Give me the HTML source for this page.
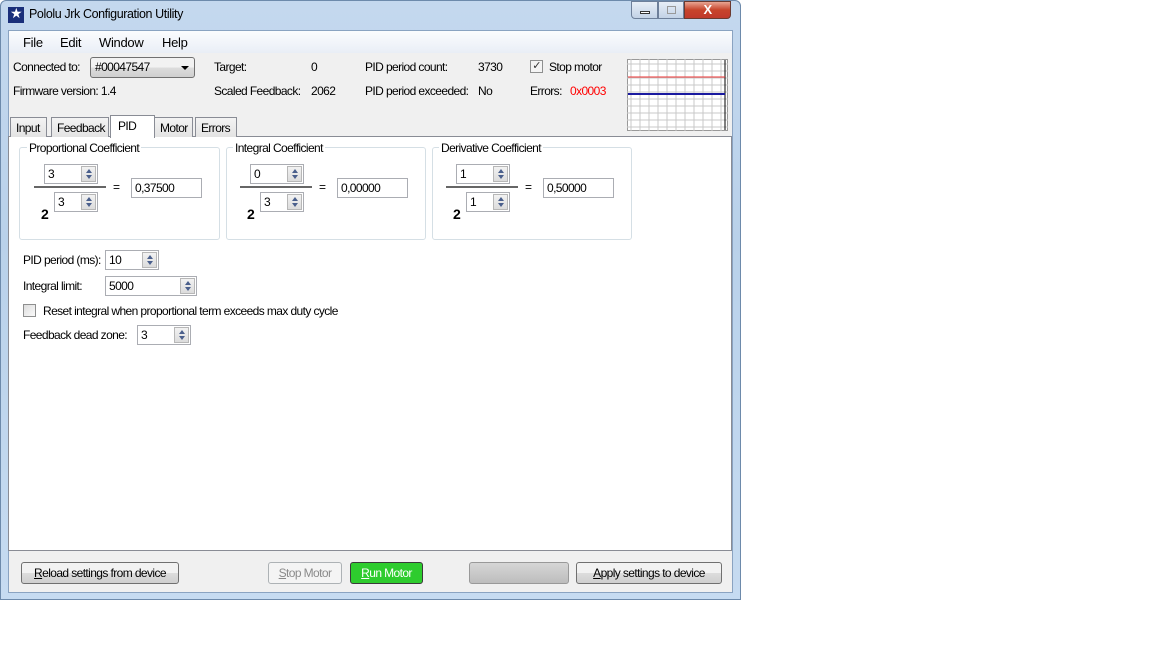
<!DOCTYPE html>
<html><head><style>
*{margin:0;padding:0;box-sizing:border-box}
body{width:1152px;height:648px;background:#fff;font-family:"Liberation Sans",sans-serif;font-size:12px;letter-spacing:-0.6px;color:#000;position:relative;overflow:hidden}
.a{position:absolute;white-space:nowrap}
.win{left:0;top:0;width:741px;height:600px;background:linear-gradient(#c4d8ee,#b9d1ea 40%,#c6dbf1);border:1px solid #6d8aab;border-radius:6px 6px 0 0}
.client{left:8px;top:30px;width:725px;height:563px;background:#f0f0f0;border:1px solid #8aa3c1}
.menu{left:9px;top:31px;width:723px;height:22px;background:linear-gradient(#fbfcfe,#e9eef6)}
.tb{background:#fff;border:1px solid #abadb3;height:20px;padding:2px 3px}
.spin{position:absolute;right:1px;top:1px;width:15px;bottom:1px;background:linear-gradient(#f2f2f2,#dcdcdc);border:1px solid #b7b7b7}
.spin:before{content:"";position:absolute;left:4px;top:2px;border:3px solid transparent;border-bottom:4px solid #4a5f8c;border-top:0}
.spin:after{content:"";position:absolute;left:4px;bottom:2px;border:3px solid transparent;border-top:4px solid #4a5f8c;border-bottom:0}
.grp{border:1px solid #d5dfe5;border-radius:3px}
.lbl{background:#fff;padding:0 2px}
.btn{border:1px solid #707070;border-radius:3px;background:linear-gradient(#f2f2f2 50%,#dddddd 50%,#cfcfcf);text-align:center;height:22px;line-height:20px}
.tab{top:117px;height:20px;border:1px solid #898c95;border-bottom:none;background:linear-gradient(#f3f3f3,#e3e3e3);padding:3px 5px 0}
</style></head><body>
<div class="a win"></div>
<div class="a" style="left:8px;top:7px;width:16px;height:16px;background:#1a2f7a"><span style="position:absolute;left:2px;top:-2px;color:#fff;font-size:14px">★</span></div>
<div class="a" style="left:29px;top:7px;font-size:12.5px;letter-spacing:-0.4px">Pololu Jrk Configuration Utility</div>
<div class="a" style="left:631px;top:1px;width:27px;height:18px;border:1px solid #6d7f9a;border-radius:0 0 0 4px;background:linear-gradient(#e7eef7,#c2d2e6)"><div style="position:absolute;left:8px;top:9px;width:10px;height:3px;border:1px solid #333;background:#fff"></div></div>
<div class="a" style="left:658px;top:1px;width:26px;height:18px;border:1px solid #6d7f9a;background:linear-gradient(#e7eef7,#c2d2e6)"><div style="position:absolute;left:8px;top:4px;width:9px;height:8px;border:1px solid #999"></div></div>
<div class="a" style="left:684px;top:1px;width:47px;height:18px;border:1px solid #6b3a30;border-radius:0 0 4px 0;background:linear-gradient(#e8a593,#c7442b 50%,#c0392b);color:#fff;font-weight:bold;text-align:center;line-height:16px;font-size:13px">X</div>
<div class="a client"></div>
<div class="a menu"></div>
<div class="a" style="left:23px;top:35px;font-size:13px;letter-spacing:-0.3px">File</div>
<div class="a" style="left:60px;top:35px;font-size:13px;letter-spacing:-0.3px">Edit</div>
<div class="a" style="left:99px;top:35px;font-size:13px;letter-spacing:-0.3px">Window</div>
<div class="a" style="left:162px;top:35px;font-size:13px;letter-spacing:-0.3px">Help</div>
<div class="a" style="left:13px;top:60px">Connected to:</div>
<div class="a btn" style="left:90px;top:57px;width:105px;height:21px;text-align:left;padding-left:4px;line-height:19px;border-color:#707070">#00047547<span style="position:absolute;right:5px;top:8px;border:4px solid transparent;border-top:4px solid #000"></span></div>
<div class="a" style="left:13px;top:84px">Firmware version: 1.4</div>
<div class="a" style="left:214px;top:60px">Target:</div>
<div class="a" style="left:311px;top:60px">0</div>
<div class="a" style="left:214px;top:84px">Scaled Feedback:</div>
<div class="a" style="left:311px;top:84px">2062</div>
<div class="a" style="left:365px;top:60px">PID period count:</div>
<div class="a" style="left:478px;top:60px">3730</div>
<div class="a" style="left:365px;top:84px">PID period exceeded:</div>
<div class="a" style="left:478px;top:84px">No</div>
<div class="a" style="left:530px;top:60px;width:13px;height:13px;border:1px solid #8e8f8f;background:#f4f4f4;font-size:11px;line-height:11px;text-align:center;color:#333">✓</div>
<div class="a" style="left:549px;top:60px">Stop motor</div>
<div class="a" style="left:530px;top:84px">Errors:</div>
<div class="a" style="left:570px;top:84px;color:#f00">0x0003</div>
<svg class="a" style="left:627px;top:59px" width="101" height="72"><rect x="0.5" y="0.5" width="100" height="71" fill="#fff" stroke="#999"/>
<g stroke="#c8c8c8"><path d="M4 0V72M13 0V72M22 0V72M31 0V72M40 0V72M49 0V72M58 0V72M67 0V72M76 0V72M85 0V72M94 0V72M0 5H101M0 12H101M0 19H101M0 26H101M0 33H101M0 40H101M0 47H101M0 54H101M0 61H101M0 68H101"/></g>
<path d="M98 1V71" stroke="#000"/><path d="M1 18H98" stroke="#e33" /><path d="M1 35H98" stroke="#1a1aa0" stroke-width="2"/></svg>
<div class="a" style="left:8px;top:136px;width:724px;height:415px;background:#fff;border:1px solid #898c95"></div>
<div class="a tab" style="left:10px;width:37px">Input</div>
<div class="a tab" style="left:51px;width:58px">Feedback</div>
<div class="a tab" style="left:154px;width:39px">Motor</div>
<div class="a tab" style="left:195px;width:42px">Errors</div>
<div class="a" style="left:110px;top:115px;width:45px;height:23px;background:#fff;border:1px solid #898c95;border-bottom:none;padding:3px 7px">PID</div>
<div class="a grp" style="left:19px;top:147px;width:201px;height:93px"></div>
<div class="a grp" style="left:226px;top:147px;width:200px;height:93px"></div>
<div class="a grp" style="left:432px;top:147px;width:200px;height:93px"></div>
<div class="a lbl" style="left:27px;top:141px">Proportional Coefficient</div>
<div class="a lbl" style="left:233px;top:141px">Integral Coefficient</div>
<div class="a lbl" style="left:439px;top:141px">Derivative Coefficient</div>

<div class="a tb" style="left:44px;top:164px;width:54px">3<div class="spin"></div></div>
<div class="a" style="left:34px;top:186px;width:72px;height:2px;background:#666"></div>
<div class="a" style="left:113px;top:180px">=</div>
<div class="a tb" style="left:131px;top:178px;width:71px">0,37500</div>
<div class="a" style="left:41px;top:206px;font-weight:bold;font-size:14px">2</div>
<div class="a tb" style="left:54px;top:192px;width:44px">3<div class="spin"></div></div>

<div class="a tb" style="left:250px;top:164px;width:54px">0<div class="spin"></div></div>
<div class="a" style="left:240px;top:186px;width:72px;height:2px;background:#666"></div>
<div class="a" style="left:319px;top:180px">=</div>
<div class="a tb" style="left:337px;top:178px;width:71px">0,00000</div>
<div class="a" style="left:247px;top:206px;font-weight:bold;font-size:14px">2</div>
<div class="a tb" style="left:260px;top:192px;width:44px">3<div class="spin"></div></div>

<div class="a tb" style="left:456px;top:164px;width:54px">1<div class="spin"></div></div>
<div class="a" style="left:446px;top:186px;width:72px;height:2px;background:#666"></div>
<div class="a" style="left:525px;top:180px">=</div>
<div class="a tb" style="left:543px;top:178px;width:71px">0,50000</div>
<div class="a" style="left:453px;top:206px;font-weight:bold;font-size:14px">2</div>
<div class="a tb" style="left:466px;top:192px;width:44px">1<div class="spin"></div></div>

<div class="a" style="left:23px;top:253px">PID period (ms):</div>
<div class="a tb" style="left:105px;top:250px;width:54px">10<div class="spin"></div></div>
<div class="a" style="left:23px;top:279px">Integral limit:</div>
<div class="a tb" style="left:105px;top:276px;width:92px">5000<div class="spin"></div></div>
<div class="a" style="left:23px;top:304px;width:13px;height:13px;border:1px solid #8e8f8f;background:linear-gradient(135deg,#ddd,#fafafa)"></div>
<div class="a" style="left:43px;top:304px">Reset integral when proportional term exceeds max duty cycle</div>
<div class="a" style="left:23px;top:328px">Feedback dead zone:</div>
<div class="a tb" style="left:137px;top:325px;width:54px">3<div class="spin"></div></div>

<div class="a btn" style="left:21px;top:562px;width:158px"><u>R</u>eload settings from device</div>
<div class="a btn" style="left:268px;top:562px;width:74px;color:#8a8a8a;border-color:#adb2b5;background:#f4f4f4"><u>S</u>top Motor</div>
<div class="a btn" style="left:350px;top:562px;width:73px;color:#fff;background:#2ecc2e;border-color:#3a3a3a"><u>R</u>un Motor</div>
<div class="a btn" style="left:469px;top:562px;width:100px;background:linear-gradient(#d6d6d6,#bdbdbd);border-color:#999"></div>
<div class="a btn" style="left:576px;top:562px;width:146px"><u>A</u>pply settings to device</div>
</body></html>
